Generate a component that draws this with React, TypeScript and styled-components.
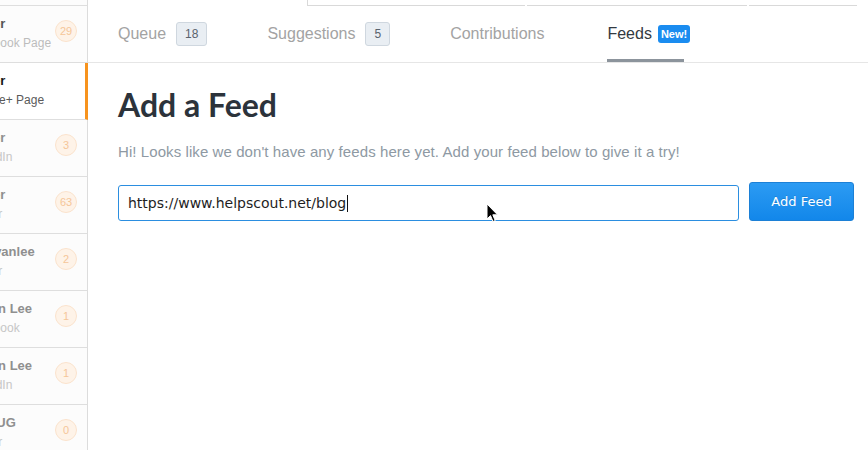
import styled, { createGlobalStyle, css } from "styled-components";

const GlobalStyle = createGlobalStyle`
  html, body {
    margin: 0;
    padding: 0;
    background: #ffffff;
    overflow: hidden;
  }
  body {
    font-family: "Liberation Sans", Arial, sans-serif;
  }
`;

// ============================= SIDEBAR =============================
type Tone = "muted" | "hover" | "active";

const accounts: { name: string; network: string; count?: number; tone: Tone }[] = [
  { name: "Buffer", network: "Twitter", count: 4, tone: "muted" },
  { name: "Buffer", network: "Facebook Page", count: 29, tone: "hover" },
  { name: "Buffer", network: "Google+ Page", tone: "active" },
  { name: "Buffer", network: "LinkedIn", count: 3, tone: "muted" },
  { name: "Buffer", network: "Twitter", count: 63, tone: "muted" },
  { name: "@kevanlee", network: "Twitter", count: 2, tone: "muted" },
  { name: "Kevan Lee", network: "Facebook", count: 1, tone: "muted" },
  { name: "Kevan Lee", network: "LinkedIn", count: 1, tone: "muted" },
  { name: "@SFUG", network: "Twitter", count: 0, tone: "muted" },
];

const nameColors: Record<Tone, string> = { muted: "#8f8f8f", hover: "#555555", active: "#141414" };
const subColors: Record<Tone, string> = { muted: "#c6c6c6", hover: "#bcbcbc", active: "#5a5a5a" };

const Sidebar = styled.aside`
  width: 88px;
  flex: none;
  height: 450px;
  overflow: hidden;
  background: #fcfcfc;
`;

const AccountList = styled.div`
  margin-top: -51px;
`;

const Account = styled.div<{ $tone: Tone }>`
  box-sizing: border-box;
  height: 57px;
  display: flex;
  align-items: center;
  padding-right: 10px;
  border-bottom: 1px solid #dedede;
  border-right: 1px solid #dcdcdc;
  ${({ $tone }) =>
    $tone === "active" &&
    css`
      background: #ffffff;
      border-right: 3px solid #f7931e;
    `}
`;

const AccountText = styled.div`
  flex: 1;
  margin-left: -33px;
  margin-bottom: 2px;
  white-space: nowrap;
`;

const AccountName = styled.div<{ $tone: Tone }>`
  font-size: 13px;
  line-height: 16px;
  font-weight: bold;
  color: ${({ $tone }) => nameColors[$tone]};
`;

const AccountNetwork = styled.div<{ $tone: Tone }>`
  font-size: 12px;
  line-height: 16px;
  margin-top: 3px;
  color: ${({ $tone }) => subColors[$tone]};
`;

const CountBubble = styled.div`
  flex: none;
  box-sizing: border-box;
  width: 22px;
  height: 22px;
  margin-bottom: 6px;
  border-radius: 50%;
  background: #fef3e8;
  border: 1px solid #fbe3cd;
  color: #f5c699;
  font-size: 11px;
  display: flex;
  align-items: center;
  justify-content: center;
`;

// ============================= MAIN =============================
const Shell = styled.div`
  display: flex;
  width: 868px;
  height: 450px;
`;

const Main = styled.main`
  flex: 1;
  min-width: 0;
  display: flex;
  flex-direction: column;
`;

const TopStrip = styled.div`
  height: 6px;
  display: flex;
  gap: 2px;
  padding-left: 219px;
`;

const StripBox = styled.div<{ $w: number; $first?: boolean }>`
  box-sizing: border-box;
  width: ${({ $w }) => $w}px;
  height: 6px;
  border-bottom: 1px solid #d9d9d9;
  ${({ $first }) => $first && "border-left: 1px solid #d9d9d9;"}
`;

const TabBar = styled.nav`
  height: 56px;
  display: flex;
  gap: 60px;
  padding-left: 30px;
  border-bottom: 1px solid #e6e6e6;
`;

const Tab = styled.div<{ $active?: boolean }>`
  position: relative;
  display: flex;
  align-items: center;
  font-size: 16px;
  color: ${({ $active }) => ($active ? "#333a41" : "#a3a3a3")};
  ${({ $active }) =>
    $active &&
    css`
      margin-left: 3px;
      &::after {
        content: "";
        position: absolute;
        left: 0;
        right: 6px;
        bottom: 0;
        height: 3px;
        background: #8c949c;
      }
    `}
`;

const CountTag = styled.span`
  box-sizing: border-box;
  height: 24px;
  margin-left: 10px;
  padding: 0 8px;
  display: flex;
  align-items: center;
  border: 1px solid #cfd7df;
  border-radius: 3px;
  background: #e9eef3;
  color: #59636d;
  font-size: 12px;
`;

const NewTag = styled.span`
  height: 18px;
  margin-left: 6px;
  padding: 0 3px;
  display: flex;
  align-items: center;
  border-radius: 3px;
  background: #1a8cf0;
  color: #ffffff;
  font-size: 11px;
  font-weight: bold;
`;

const Content = styled.section`
  position: relative;
  flex: 1;
  padding: 23px 14px 0 30px;
`;

const Title = styled.h1`
  margin: 0;
  font-family: Lato, "Liberation Sans", sans-serif;
  font-weight: 700;
  font-size: 32px;
  line-height: 1.2;
  color: #2c333b;
`;

const Lead = styled.p`
  margin: 18px 0 0;
  font-size: 15px;
  letter-spacing: 0.08px;
  line-height: 20px;
  color: #8e99a3;
`;

const FeedForm = styled.div`
  margin-top: 20px;
  display: flex;
  align-items: flex-end;
  gap: 10px;
`;

const UrlField = styled.div`
  box-sizing: border-box;
  flex: 1;
  height: 36px;
  padding: 0 9px;
  display: flex;
  align-items: center;
  border: 1px solid #2b8ee0;
  border-radius: 3px;
  background: #ffffff;
  font-family: "DejaVu Sans", sans-serif;
  font-size: 14px;
  color: #1e1e1e;
`;

const Caret = styled.span`
  width: 1px;
  height: 17px;
  margin-left: 1px;
  background: #111111;
`;

const AddButton = styled.button`
  box-sizing: border-box;
  width: 105px;
  height: 39px;
  border: 1px solid #1c80d6;
  border-radius: 3px;
  background: linear-gradient(#2c9bf3, #1287ea);
  color: #ffffff;
  font-family: "DejaVu Sans", sans-serif;
  font-size: 13px;
  text-shadow: 0 -1px 0 rgba(0, 0, 0, 0.12);
  cursor: pointer;
`;

const Pointer = styled.svg`
  position: absolute;
  left: 398px;
  top: 140px;
`;

export default function App() {
  return (
    <Shell>
      <GlobalStyle />
      <Sidebar>
        <AccountList>
          {accounts.map((a, i) => (
            <Account key={i} $tone={a.tone}>
              <AccountText>
                <AccountName $tone={a.tone}>{a.name}</AccountName>
                <AccountNetwork $tone={a.tone}>{a.network}</AccountNetwork>
              </AccountText>
              {a.count !== undefined && <CountBubble>{a.count}</CountBubble>}
            </Account>
          ))}
        </AccountList>
      </Sidebar>

      <Main>
        <TopStrip>
          <StripBox $w={218} $first />
          <StripBox $w={220} />
          <StripBox $w={108} />
        </TopStrip>

        <TabBar>
          <Tab>
            Queue<CountTag>18</CountTag>
          </Tab>
          <Tab>
            Suggestions<CountTag>5</CountTag>
          </Tab>
          <Tab>Contributions</Tab>
          <Tab $active>
            Feeds<NewTag>New!</NewTag>
          </Tab>
        </TabBar>

        <Content>
          <Title>Add a Feed</Title>
          <Lead>
            Hi! Looks like we don't have any feeds here yet. Add your feed below to give it a try!
          </Lead>
          <FeedForm>
            <UrlField>
              https://www.helpscout.net/blog
              <Caret />
            </UrlField>
            <AddButton>Add Feed</AddButton>
          </FeedForm>

          {/* mouse pointer over the field */}
          <Pointer width="13" height="20" viewBox="0 0 13 20">
            <path
              d="M1 1 L1 16 L4.5 12.6 L7 18.5 L9.2 17.6 L6.8 11.8 L11.5 11.8 Z"
              fill="#000"
              stroke="#fff"
              strokeWidth="1"
              strokeLinejoin="round"
            />
          </Pointer>
        </Content>
      </Main>
    </Shell>
  );
}
